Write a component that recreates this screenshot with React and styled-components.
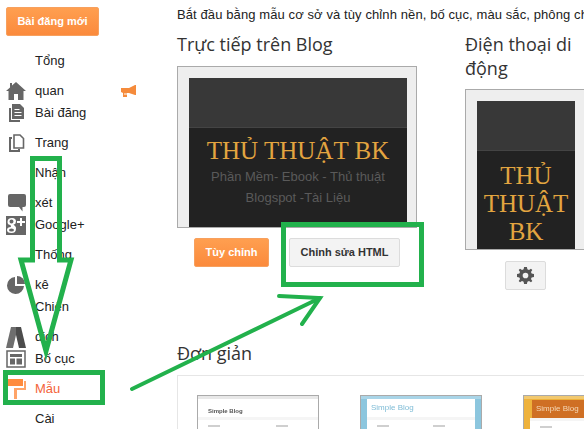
import React from 'react'
import styled, { createGlobalStyle } from 'styled-components'

const GREEN = '#22b14c'

const navItems = [
  { lines: ['Tổng', 'quan'], icon: 'home', badge: true },
  { lines: ['Bài đăng'], icon: 'posts' },
  { lines: ['Trang'], icon: 'pages' },
  { lines: ['Nhận', 'xét'], icon: 'comments' },
  { lines: ['Google+'], icon: 'gplus' },
  { lines: ['Thống', 'kê'], icon: 'stats' },
  { lines: ['Chiến', 'dịch'], icon: 'ads' },
  { lines: ['Bố cục'], icon: 'layout' },
  { lines: ['Mẫu'], icon: 'brush', active: true },
  { lines: ['Cài', 'đặt'], icon: 'none' },
]

function NavIcon({ name }) {
  const fill = '#666'
  if (name === 'home') {
    return (
      <svg width="20" height="18" viewBox="0 0 20 18">
        <path fill={fill} d="M10 0 L20 9 L17.5 9 L17.5 18 L12 18 L12 12 L8 12 L8 18 L2.5 18 L2.5 9 L0 9 L4 5.4 L4 1 L6 1 L6 3.6 Z" />
      </svg>
    )
  }
  if (name === 'posts') {
    return (
      <svg width="20" height="18" viewBox="0 0 20 18">
        <path fill={fill} d="M3 4 L5 4 L5 16 L14 16 L14 18 L3 18 Z" />
        <path fill={fill} d="M6 0 L14 0 L18 4 L18 15 L6 15 Z" />
        <path fill="#fff" d="M8.500 5h5v1h-5zM8.500 8h7v1h-7zM8.500 11h7v1h-7z" />
      </svg>
    )
  }
  if (name === 'pages') {
    return (
      <svg width="20" height="18" viewBox="0 0 20 18">
        <path fill="none" stroke={fill} strokeWidth="1.600" d="M8 1 L14 1 L17.500 4.500 L17.500 14 L8 14 Z" />
        <path fill="none" stroke={fill} strokeWidth="2" d="M6 4 L4 4 L4 17 L13 17 L13 15" />
      </svg>
    )
  }
  if (name === 'comments') {
    return (
      <svg width="20" height="20" viewBox="0 0 20 20">
        <path fill={fill} d="M4 1 L18 1 Q20 1 20 3 L20 12 Q20 14 18 14 L16.500 14 L16.500 18.500 L13 14 L4 14 Q2 14 2 12 L2 3 Q2 1 4 1 Z" />
      </svg>
    )
  }
  if (name === 'gplus') {
    return (
      <svg width="20" height="19" viewBox="0 0 20 19">
        <rect fill={fill} width="20" height="19" />
        <path fill="#fff" d="M14 2h2v3h3v2h-3v3h-2V7h-3V5h3z" />
        <path fill="#fff" d="M6 2 Q10 2 10 5.500 Q10 8 7.500 8.500 Q10 10.500 10 12.500 Q10 17 5.500 17 Q1 17 1 14 Q1 11 5 11 L4.500 9 Q1.500 9 1.500 6 Q1.500 2 6 2 Z M5.500 3.500 Q3.500 3.500 3.500 5.500 Q3.500 7.500 5.500 7.500 Q7.500 7.500 7.500 5.500 Q7.500 3.500 5.500 3.500 Z M5.500 12.500 Q3 12.500 3 14 Q3 15.500 5.500 15.500 Q8 15.500 8 14 Q8 12.500 5.500 12.500 Z" />
      </svg>
    )
  }
  if (name === 'stats') {
    return (
      <svg width="20" height="18" viewBox="0 0 20 18">
        <path fill={fill} d="M9 1 L9 10 L18 10 A8.500 8.500 0 1 1 9 1 Z" />
        <path fill={fill} d="M11 0 A8 8 0 0 1 19 8 L11 8 Z" />
      </svg>
    )
  }
  if (name === 'ads') {
    return (
      <svg width="20" height="21" viewBox="0 0 20 21">
        <path fill="#6e6e6e" d="M5 0 H10 V8 L7 21 H0 Z" />
        <path fill="#4c4c4c" d="M10 0 H15 L20 21 H13 L10 8 Z" />
      </svg>
    )
  }
  if (name === 'layout') {
    return (
      <svg width="20" height="18" viewBox="0 0 20 18">
        <path fill="none" stroke={fill} strokeWidth="1.500" d="M1 1 H19 V17 H1 Z" />
        <path fill={fill} d="M4 4 H16 V7 H4 Z M4 8.500 H9 V14.500 H4 Z M10.500 8.500 H16 V14.500 H10.500 Z" />
      </svg>
    )
  }
  if (name === 'brush') {
    return (
      <svg width="20" height="20" viewBox="0 0 20 20">
        <path fill="#ff8b3d" d="M1 0 H17 V7 H1 Z" />
        <path fill="#ffa468" d="M18 2 H20 V11 H11 V20 H8 V9 H18 Z" />
      </svg>
    )
  }
  return <svg width="20" height="18" viewBox="0 0 20 18" />
}

function Megaphone() {
  return (
    <svg width="15" height="12" viewBox="0 0 15 12">
      <path fill="#f58b3c" d="M0 3 L8 3 L14 0 L15 0 L15 10 L14 10 L8 8 L6 8 L6 12 L2 12 L2 8 L0 7 Z" />
      <path fill="#fff" d="M3 8.500h5v1h-5z" />
    </svg>
  )
}

function GearIcon() {
  return (
    <svg width="17" height="17" viewBox="0 0 18 18">
      <path fill="#555" fillRule="evenodd" d="M7.500 0 H10.500 L11 2.500 L12.700 3.200 L14.800 1.800 L16.200 3.200 L14.800 5.300 L15.500 7 L18 7.500 V10.500 L15.500 11 L14.800 12.700 L16.200 14.800 L14.800 16.200 L12.700 14.800 L11 15.500 L10.500 18 H7.500 L7 15.500 L5.300 14.800 L3.200 16.200 L1.800 14.800 L3.200 12.700 L2.500 11 L0 10.500 V7.500 L2.500 7 L3.200 5.300 L1.800 3.200 L3.200 1.800 L5.300 3.200 L7 2.500 Z M9 6 A3 3 0 1 0 9 12 A3 3 0 1 0 9 6 Z" />
    </svg>
  )
}

function Annotations() {
  return (
    <Overlay viewBox="0 0 584 429" width="584" height="429">
      <g fill="none" stroke={GREEN} strokeLinecap="round">
        <path strokeWidth="5" strokeLinecap="butt" d="M32.500 260 V158.500 H59.500 V260 H71 L46 351 L21 260 Z" />
        <rect strokeWidth="5" x="5.500" y="372.500" width="97" height="30" />
        <rect strokeWidth="5" x="283.500" y="224.500" width="138" height="60" />
        <path strokeWidth="4" d="M132 389 L320 298 M279 296 L320 298 L302 324" />
      </g>
    </Overlay>
  )
}

function Thumb({ tone }) {
  return (
    <ThumbFrame $tone={tone}>
      <ThumbBar $tone={tone} />
      <ThumbHead $tone={tone}>Simple Blog</ThumbHead>
      <ThumbTabs />
      <ThumbLines>
        <ThumbLine />
        <ThumbLine />
      </ThumbLines>
    </ThumbFrame>
  )
}

function App() {
  return (
    <Page>
      <GlobalStyle />
      <Sidebar>
        <NewPost>Bài đăng mới</NewPost>
        <Nav>
          {navItems.map((item) => (
            <NavItem key={item.lines[0]} $wrapped={item.lines.length > 1} $active={item.active}>
              <IconSlot>
                <NavIcon name={item.icon} />
              </IconSlot>
              <NavLabel>
                {item.lines.map((line) => (
                  <div key={line}>{line}</div>
                ))}
              </NavLabel>
              {item.badge && (
                <Badge>
                  <Megaphone />
                </Badge>
              )}
            </NavItem>
          ))}
        </Nav>
      </Sidebar>

      <Main>
        <Intro>Bắt đầu bằng mẫu cơ sở và tùy chỉnh nền, bố cục, màu sắc, phông chữ và nhiều thứ khác</Intro>
        <Columns>
          <BlogColumn>
            <Heading>Trực tiếp trên Blog</Heading>
            <PreviewCard>
              <PreviewInner>
                <PreviewTop />
                <PreviewBody>
                  <BlogTitle>THỦ THUẬT BK</BlogTitle>
                  <BlogTagline>Phần Mềm- Ebook - Thủ thuật Blogspot -Tài Liệu</BlogTagline>
                </PreviewBody>
              </PreviewInner>
            </PreviewCard>
            <Actions>
              <OrangeButton>Tùy chỉnh</OrangeButton>
              <GreyButton>Chỉnh sửa HTML</GreyButton>
            </Actions>
          </BlogColumn>

          <MobileColumn>
            <MobileHeading>Điện thoại di động</MobileHeading>
            <MobileCard>
              <MobileInner>
                <MobileTop />
                <MobileBody>
                  <MobileTitle>THỦ THUẬT BK</MobileTitle>
                </MobileBody>
              </MobileInner>
            </MobileCard>
            <GearRow>
              <GearButton>
                <GearIcon />
              </GearButton>
            </GearRow>
          </MobileColumn>
        </Columns>

        <SimpleHeading>Đơn giản</SimpleHeading>
        <ThumbPanel>
          <Thumb tone="plain" />
          <Thumb tone="blue" />
          <Thumb tone="orange" />
        </ThumbPanel>
      </Main>

      <Annotations />
    </Page>
  )
}

export default App

const GlobalStyle = createGlobalStyle`
  html, body {
    margin: 0;
    padding: 0;
    background: #fff;
    overflow: hidden;
  }
`

const Page = styled.div`
  position: relative;
  display: flex;
  width: 584px;
  height: 429px;
  overflow: hidden;
  background: #fff;
  font-family: "Liberation Sans", Arial, sans-serif;
  color: #222;
`

const Overlay = styled.svg`
  position: absolute;
  left: 0;
  top: 0;
  pointer-events: none;
`

const Sidebar = styled.div`
  flex: 0 0 177px;
  padding: 7px 0 0 6px;
  box-sizing: border-box;
`

const NewPost = styled.div`
  width: 93px;
  height: 29px;
  box-sizing: border-box;
  border: 1px solid #f7a05e;
  border-radius: 2px;
  background: linear-gradient(#ff9f50, #fb8a3c);
  color: #fff;
  font-size: 11px;
  font-weight: bold;
  line-height: 27px;
  text-align: center;
`

const Nav = styled.div`
  display: flex;
  flex-direction: column;
  margin-top: 10px;
  margin-left: -6px;
`

const NavItem = styled.div`
  display: flex;
  align-items: flex-end;
  margin-bottom: ${(p) => (p.$wrapped ? '-8px' : '0')};
  color: ${(p) => (p.$active ? '#f4633a' : '#222')};
`

const IconSlot = styled.div`
  flex: 0 0 35px;
  height: 30px;
  padding-left: 6px;
  box-sizing: border-box;
  display: flex;
  align-items: center;
`

const NavLabel = styled.div`
  font-size: 13px;
  line-height: 30px;
  width: 86px;
`

const Badge = styled.div`
  height: 30px;
  display: flex;
  align-items: center;
`

const Main = styled.div`
  flex: 1;
  min-width: 0;
`

const Intro = styled.div`
  font-size: 13px;
  line-height: 16px;
  letter-spacing: 0.1px;
  margin-top: 7px;
  white-space: nowrap;
`

const Columns = styled.div`
  display: flex;
  margin-top: 9px;
  height: 294px;
`

const Heading = styled.div`
  font-family: "Open Sans", sans-serif;
  font-size: 18px;
  line-height: 24px;
  color: #333;
`

const BlogColumn = styled.div`
  flex: 0 0 240px;
`

const MobileColumn = styled.div`
  flex: 0 0 140px;
  margin-left: 48px;
`

const MobileHeading = styled(Heading)`
  width: 130px;
`

const PreviewCard = styled.div`
  width: 240px;
  height: 162px;
  margin-top: 10px;
  box-sizing: border-box;
  border: 1px solid #aaa;
  background: #eee;
  padding: 11px 9px 0 11px;
`

const PreviewInner = styled.div`
  height: 100%;
  display: flex;
  flex-direction: column;
  background: #222;
`

const PreviewTop = styled.div`
  height: 49px;
  background: #383838;
  border-bottom: 1px solid #444;
`

const PreviewBody = styled.div`
  flex: 1;
  text-align: center;
  padding-top: 8px;
`

const BlogTitle = styled.div`
  font-family: "Liberation Serif", serif;
  font-size: 25px;
  line-height: 30px;
  color: #e3a540;
`

const BlogTagline = styled.div`
  font-size: 13px;
  line-height: 21px;
  color: #5a5a5a;
  padding: 0 12px;
`

const Actions = styled.div`
  display: flex;
  gap: 20px;
  margin: 10px 0 0 17px;
`

const OrangeButton = styled.div`
  width: 75px;
  height: 29px;
  box-sizing: border-box;
  border: 1px solid #f7a05e;
  border-radius: 2px;
  background: linear-gradient(#ff9f50, #fb8a3c);
  color: #fff;
  font-size: 11px;
  font-weight: bold;
  line-height: 27px;
  text-align: center;
`

const GreyButton = styled.div`
  width: 111px;
  height: 29px;
  box-sizing: border-box;
  border: 1px solid #dcdcdc;
  border-radius: 2px;
  background: #f3f3f3;
  color: #333;
  font-size: 11px;
  font-weight: bold;
  line-height: 27px;
  text-align: center;
`

const MobileCard = styled.div`
  width: 140px;
  height: 161px;
  margin-top: 9px;
  box-sizing: border-box;
  border: 1px solid #aaa;
  background: #eee;
  padding: 11px 0 0 11px;
`

const MobileInner = styled.div`
  width: 98px;
  height: 100%;
  display: flex;
  flex-direction: column;
  background: #222;
  overflow: hidden;
`

const MobileTop = styled.div`
  height: 49px;
  background: #383838;
  border-bottom: 1px solid #444;
`

const MobileBody = styled.div`
  padding: 11px 6px 0;
  text-align: center;
`

const MobileTitle = styled.div`
  font-family: "Liberation Serif", serif;
  font-size: 25px;
  line-height: 28px;
  color: #e3a540;
`

const GearRow = styled.div`
  margin: 11px 0 0 40px;
`

const GearButton = styled.div`
  width: 41px;
  height: 29px;
  box-sizing: border-box;
  border: 1px solid #dcdcdc;
  border-radius: 2px;
  background: #f3f3f3;
  display: flex;
  align-items: center;
  justify-content: center;
`

const SimpleHeading = styled(Heading)`
  margin-top: 15px;
`

const ThumbPanel = styled.div`
  display: flex;
  gap: 41px;
  margin-top: 10px;
  padding: 19px 0 0 19px;
  width: 500px;
  height: 80px;
  box-sizing: border-box;
  border-top: 1px solid #e6e6e6;
  border-left: 1px solid #e6e6e6;
`

const ThumbFrame = styled.div`
  flex: 0 0 122px;
  height: 60px;
  box-sizing: border-box;
  border: 1px solid #aaa;
  padding: ${(p) => (p.$tone === 'plain' ? '0' : '0 6px')};
  background: ${(p) => ({ plain: '#fff', blue: '#8cc6de', orange: '#eeb23c' }[p.$tone])};
  filter: blur(0.4px);
`

const ThumbBar = styled.div`
  height: 3px;
  margin: ${(p) => (p.$tone === 'plain' ? '0' : '0 -6px')};
  background: ${(p) => ({ plain: '#e8e8e8', blue: '#a9d5e8', orange: '#f2c96f' }[p.$tone])};
`

const ThumbHead = styled.div`
  padding: ${(p) => (p.$tone === 'plain' ? '4px 0 0 10px' : '1px 0 1px 4px')};
  margin: ${(p) => (p.$tone === 'orange' ? '1px 0 0 2px' : '0')};
  height: 18px;
  box-sizing: border-box;
  font-size: ${(p) => (p.$tone === 'plain' ? '6px' : '8px')};
  line-height: 16px;
  font-weight: ${(p) => (p.$tone === 'plain' ? 'bold' : 'normal')};
  color: ${(p) => ({ plain: '#555', blue: '#7fbcd6', orange: '#f6d9b8' }[p.$tone])};
  background: ${(p) => ({ plain: '#fff', blue: '#fff', orange: '#cf6f24' }[p.$tone])};
`

const ThumbTabs = styled.div`
  height: 3px;
  background: #f5f5f5;
`

const ThumbLines = styled.div`
  display: flex;
  justify-content: space-between;
  height: 35px;
  padding: 5px 30px 0 10px;
  background: #fff;
`

const ThumbLine = styled.div`
  width: 12px;
  height: 2px;
  background: #cfcfcf;
`
